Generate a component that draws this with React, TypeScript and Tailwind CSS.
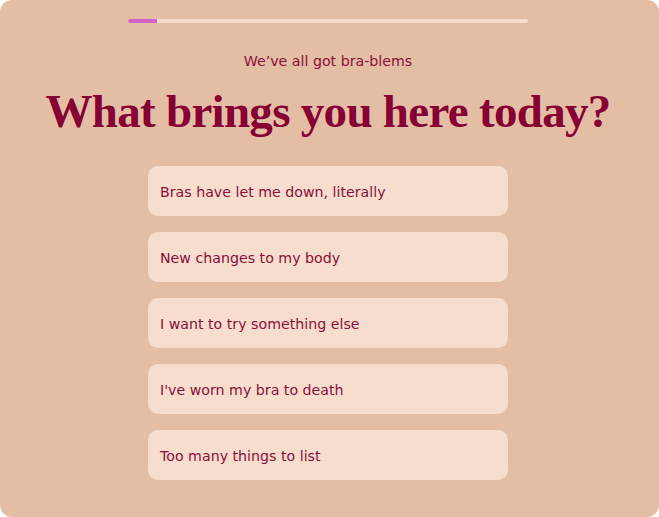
const options = [
    'Bras have let me down, literally',
    'New changes to my body',
    'I want to try something else',
    "I've worn my bra to death",
    'Too many things to list',
];

const App = () => {
    return (
        <div className="w-[659px] h-[517px] bg-white">
            <div className="h-full rounded-xl bg-[#e3bea5] flex flex-col items-center pt-[19px] pr-[3px]">
                <div className="w-[400px] h-1 rounded-full bg-[#f7ddd0] overflow-hidden">
                    <div className="w-[29px] h-full bg-[#d463c8]"></div>
                </div>
                <p className="mt-[28px] text-[14.2px] leading-5 text-[#8a0f3a] font-['DejaVu_Sans',sans-serif]">We’ve all got bra-blems</p>
                <h1 className="mt-[12px] text-[47px] leading-[56px] font-bold tracking-[-0.7px] text-[#870033] font-['Liberation_Serif',serif]">
                    What brings you here today?
                </h1>
                <div className="mt-[27px] flex flex-col gap-4">
                    {options.map((opt, index) => (
                        <button
                            key={index}
                            className="w-[360px] h-[50px] rounded-[10px] bg-[#f7ddce] px-3 pt-1 text-left text-[14.2px] text-[#8a0f3a] font-['DejaVu_Sans',sans-serif]"
                        >
                            {opt}
                        </button>
                    ))}
                </div>
            </div>
        </div>
    );
};

export default App;
